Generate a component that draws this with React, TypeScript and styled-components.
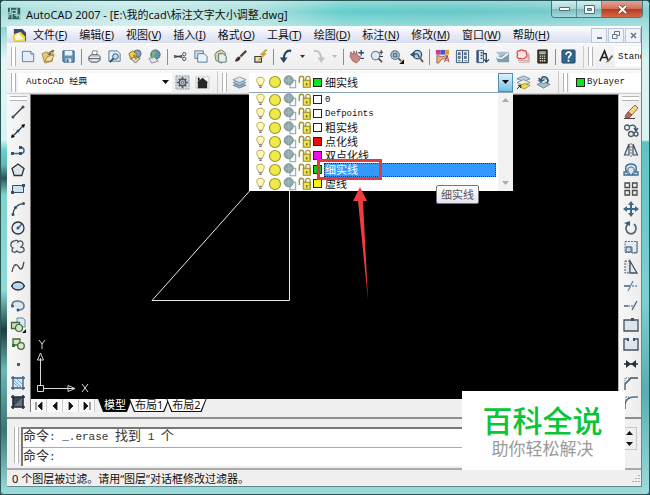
import React from 'react';
import styled, { createGlobalStyle } from 'styled-components';

const uiFont = '"Noto Sans", "Noto Sans CJK SC", sans-serif';
const monoFont = '"Liberation Mono", "Noto Sans CJK SC", monospace';

const GlobalStyle = createGlobalStyle`
  *, *::before, *::after { box-sizing: border-box; }
  body { margin: 0; background: #1f4648; font-family: ${uiFont}; font-size: 11px; color: #111; }
  button, input, select { font: inherit; color: inherit; margin: 0; padding: 0; border: 0; background: none; border-radius: 0; }
  svg { display: block; flex: none; }
`;

const Window = styled.div`
  position: relative;
  min-height: 100vh;
  display: flex;
  flex-direction: column;
  padding: 0 8px 8px 7px;
  overflow: hidden;
  border-radius: 6px 6px 4px 4px;
  background:
    linear-gradient(180deg, #b9e4e2 0, #8fd4d0 26px, #e6f6f5 60px, #d8f3f2 140px, #67d0cb 150px, #5fbab7 165px, #2b5554 178px, #7fd4cd 195px, #8cdcd4 290px, #1d3f3f 330px, #6bb9b3 370px, #3b7573 430px, #96dad6 490px) left / 7px 100% no-repeat,
    linear-gradient(180deg, #7fd0d2 0, #d9f3f3 60px, #d9f3f3 140px, #5fc3c2 142px, #7ed0d0 300px, #58aeae 390px, #9fdcdc 100%) right / 8px 100% no-repeat,
    #9bd9d8;
  box-shadow: inset 0 0 0 1px #2c5557;
`;

const TitleBar = styled.header`
  display: flex;
  align-items: flex-start;
  height: 26px;
  margin: 1px -7px -1px -6px;
  padding: 0 6px 0 7px;
  background: linear-gradient(180deg, rgba(255,255,255,.3), rgba(255,255,255,0) 40%, rgba(255,255,255,.35)),
    linear-gradient(100deg, #a5dddb 0, #c4e9e7 22%, #a8dfdd 40%, #63cdcb 53%, #66c8c8 70%, #83cfd1 100%);
`;
const Title = styled.h1`
  flex: 1;
  display: flex;
  align-items: center;
  gap: 5px;
  height: 25px;
  margin: 0;
  font-size: 11px;
  font-weight: 400;
  white-space: nowrap;
`;
const Caption = styled.div`
  display: flex;
  height: 17px;
  border: 1px solid #48777d;
  border-top: 0;
  border-radius: 0 0 4px 4px;
  overflow: hidden;
`;
const CaptionButton = styled.button<{ $close?: boolean }>`
  display: grid;
  place-items: center;
  width: ${p => (p.$close ? 40 : 25)}px;
  border-right: ${p => (p.$close ? 0 : 1)}px solid #62939a;
  background: ${p => p.$close
    ? 'linear-gradient(#e3a595 0, #d2705a 48%, #b93a20 52%, #d5684a 100%)'
    : 'linear-gradient(#d3eef0 0, #a9d6da 48%, #7db9bf 52%, #a4dbdd 100%)'};
`;

const Client = styled.div`
  flex: 1;
  display: flex;
  flex-direction: column;
  background: #f0f0f0;
  border-right: 1px solid #5d8d90;
  border-bottom: 1px solid #5d8d90;
`;

const MenuBar = styled.nav`
  display: flex;
  align-items: center;
  height: 17px;
  padding-left: 5px;
  border-top: 1px solid #f8ffff;
  background: linear-gradient(#fbfcfe, #e4e8f5 60%, #d9dff0);
`;
const MenuButton = styled.button`
  padding: 0 6px;
  height: 16px;
  line-height: 16px;
  white-space: nowrap;
`;
const MdiButtons = styled.div`
  display: flex;
  gap: 1px;
  margin-left: auto;
`;
const MdiButton = styled.button`
  display: grid;
  place-items: center;
  width: 16px;
  height: 15px;
  border: 1px solid #bcc7d6;
  background: #f1f5fb;
`;

const ToolBar = styled.div<{ $height: number }>`
  display: flex;
  align-items: center;
  height: ${p => p.$height}px;
  border-top: 1px solid #fdfdfd;
  border-bottom: 1px solid #cfcfcf;
  background: linear-gradient(#f6f6f6, #efefef);
  white-space: nowrap;
`;
const Grip = styled.span`
  flex: none;
  width: 5px;
  height: 19px;
  margin: 0 2px 0 4px;
  border: solid #b4b4b4;
  border-width: 0 1px;
  background: #fff;
`;
const GroupEnd = styled.span`
  flex: none;
  width: 1px;
  height: 22px;
  margin-left: 5px;
  background: #cbcbcb;
`;
const Separator = styled.span`
  flex: none;
  width: 1px;
  height: 16px;
  margin: 0 2px 0 3px;
  background: #8e8e8e;
`;
const ToolButton = styled.button<{ $narrow?: boolean }>`
  flex: none;
  display: grid;
  place-items: center;
  width: ${p => (p.$narrow ? 12 : 20)}px;
  height: 20px;
`;
const Field = styled.div<{ $width?: number }>`
  position: relative;
  display: flex;
  align-items: center;
  flex: ${p => (p.$width ? 'none' : '1')};
  width: ${p => (p.$width ? `${p.$width}px` : 'auto')};
  height: 19px;
  background: #fff;
`;
const ColorField = styled(Field)`
  padding-left: 6px;
`;
const PlainSelect = styled.select<{ $indent: number }>`
  appearance: none;
  flex: 1;
  min-width: 0;
  height: 19px;
  padding-left: ${p => p.$indent}px;
  font-family: ${monoFont};
  font-size: 9px;
`;
const SelectArrow = styled.span`
  display: grid;
  place-items: center;
  width: 14px;
  pointer-events: none;
`;
const StyleInput = styled.input`
  flex: 1;
  min-width: 0;
  height: 20px;
  padding-left: 3px;
  background: #fff;
  font-family: ${monoFont};
  font-size: 9px;
`;

const LayerRow = styled.div`
  display: flex;
  align-items: center;
  flex: 1;
  height: 14px;
  padding-left: 5px;
`;
const LayerSelect = styled.select`
  appearance: none;
  flex: 1;
  min-width: 0;
  height: 19px;
  padding-left: 1px;
  font-size: 11px;
`;
const ArrowButton = styled.button`
  display: grid;
  place-items: center;
  width: 15px;
  height: 19px;
  border: 1px solid #4e90b4;
  background: linear-gradient(#dff2fc, #a8d9f2 50%, #79bfe3);
`;
const Swatch = styled.span<{ $color: string }>`
  flex: none;
  width: 9px;
  height: 9px;
  margin-right: 2px;
  border: 1px solid #222;
  background: ${p => p.$color};
`;
const LayerPopup = styled.div`
  position: absolute;
  z-index: 3;
  top: 19px;
  left: 0;
  right: 0;
  display: flex;
  background: #fff;
  border-top: 1px solid #8aa5bb;
`;
const LayerList = styled.ul`
  flex: 1;
  margin: 0;
  padding: 0;
  list-style: none;
`;
const LayerOption = styled.li`
  display: flex;
  align-items: center;
  height: 14px;
  padding-left: 5px;
`;
const LayerName = styled.span<{ $active?: boolean; $latin?: boolean }>`
  flex: 1;
  height: 14px;
  padding-left: ${p => (p.$active ? 0 : 1)}px;
  margin-right: 2px;
  line-height: ${p => (p.$active ? 12 : 14)}px;
  font-family: ${p => (p.$latin ? monoFont : uiFont)};
  font-size: ${p => (p.$latin ? 9 : 11)}px;
  color: ${p => (p.$active ? '#fff' : '#111')};
  background: ${p => (p.$active ? '#3399ff' : 'transparent')};
  border: ${p => (p.$active ? '1px dotted #17345c' : '0')};
`;
const ListScroll = styled.div`
  display: flex;
  flex-direction: column;
  justify-content: space-between;
  width: 15px;
  background: #f2f2f2;
`;
const ScrollButton = styled.button`
  display: grid;
  place-items: center;
  width: 100%;
  height: 15px;
`;
const Highlight = styled.div`
  position: absolute;
  left: 68px;
  top: 66px;
  width: 65px;
  height: 21px;
  border: 3px solid #e23b3f;
`;
const Pointer = styled.svg`
  position: absolute;
  left: 104px;
  top: 93px;
`;
const Tooltip = styled.div`
  position: absolute;
  left: 187px;
  top: 92px;
  height: 19px;
  padding: 0 4px;
  line-height: 17px;
  border: 1px solid #777;
  border-radius: 2px;
  color: #555;
  background: linear-gradient(#fff, #e4e5f0);
`;

const Workspace = styled.main`
  flex: 1;
  display: flex;
  min-height: 0;
`;
const SideBar = styled.div<{ $right?: boolean }>`
  flex: none;
  display: flex;
  flex-direction: column;
  width: ${p => (p.$right ? 22 : 23)}px;
  background: linear-gradient(90deg, #f8f8f8, #ececec);
`;
const SideGrip = styled.span`
  width: 17px;
  height: 5px;
  margin: 2px 2px 1px 3px;
  border: solid #b4b4b4;
  border-width: 1px 0;
  background: #fff;
`;
const SideButton = styled.button`
  flex: 1;
  min-height: 0;
  display: grid;
  place-items: center;
  padding-right: 2px;
`;
const ModifyButton = styled(SideButton)`
  padding: 0 0 0 2px;
`;
const Document = styled.section`
  flex: 1;
  display: flex;
  flex-direction: column;
  border-left: 1px solid #777;
  border-right: 1px solid #b5b5b5;
  border-top: 1px solid #777;
`;
const Canvas = styled.div`
  position: relative;
  flex: 1;
  overflow: hidden;
  background: #000;
`;
const Drawing = styled.svg`
  position: absolute;
  left: 0;
  top: 0;
`;
const Ucs = styled.svg`
  position: absolute;
  left: 4px;
  bottom: 3px;
`;
const TabStrip = styled.div`
  display: flex;
  height: 13px;
`;
const TabNav = styled.button`
  display: grid;
  place-items: center;
  width: 16px;
  border-right: 1px solid #ccc;
  background: #fafafa;
`;
const Tab = styled.button<{ $active?: boolean; $first?: boolean }>`
  height: 13px;
  margin-left: ${p => (p.$first ? 3 : -3)}px;
  padding: 0 1px 1px;
  background: #111;
  clip-path: polygon(0 0, 100% 0, calc(100% - 5px) 100%, 5px 100%);
  span {
    display: block;
    height: 12px;
    padding: 0 5px;
    line-height: 12px;
    background: ${p => (p.$active ? '#000' : '#fff')};
    color: ${p => (p.$active ? '#fff' : '#111')};
    clip-path: polygon(0 0, 100% 0, calc(100% - 5px) 100%, 5px 100%);
  }
`;

const CommandPanel = styled.section`
  display: flex;
  align-items: stretch;
  height: 51px;
  margin-top: 5px;
  padding: 8px 4px 2px 3px;
  border-top: 2px solid #8d8d8d;
`;
const CommandGrip = styled(Grip)`
  height: 36px;
`;
const CommandBox = styled.div`
  flex: 1;
  display: flex;
  flex-direction: column;
  border: 1px solid #777;
  border-width: 2px 0 0 2px;
  background: #fff;
  color: #333;
  font-family: ${monoFont};
  font-size: 13px;
`;
const HistoryLine = styled.output`
  height: 20px;
  line-height: 15px;
  border-bottom: 1px solid #aaa;
  white-space: pre;
`;
const Prompt = styled.label`
  display: flex;
  align-items: baseline;
  height: 18px;
  line-height: 18px;
`;
const PromptInput = styled.input`
  flex: 1;
  min-width: 0;
  padding-left: 4px;
`;
const Half = styled.span`
  font-size: 11px;
`;
const CommandScroll = styled.div`
  display: flex;
  flex-direction: column;
  width: 14px;
  height: 23px;
  border: 1px solid #c8c8c8;
  border-width: 1px 1px 1px 0;
`;
const SpinButton = styled.button`
  flex: 1;
  display: grid;
  place-items: center;
`;
const StatusBar = styled.footer`
  display: flex;
  align-items: center;
  justify-content: space-between;
  height: 18px;
  padding-left: 5px;
  border-top: 2px solid #aaa;
  background: #f0eeee;
`;

const Watermark = styled.aside`
  position: absolute;
  z-index: 5;
  right: 25px;
  bottom: 25px;
  display: flex;
  flex-direction: column;
  align-items: center;
  justify-content: center;
  width: 163px;
  height: 79px;
  padding: 4px 2px 0 0;
  background: #fff;
  font-family: "Liberation Sans", "Noto Sans CJK SC", sans-serif;
`;
const WatermarkTitle = styled.strong`
  font-size: 30px;
  line-height: 35px;
  font-weight: 500;
  color: #08c636;
`;
const WatermarkText = styled.span`
  font-size: 17px;
  line-height: 22px;
  color: #9a9a9a;
`;

const navy = '#2d5375';
const pale = '#cfe0ef';
const dark = '#2e3338';

const icons: Record<string, React.ReactNode> = {
  new: <path d="M1.5 2.5h9l3 3v8h-12z M10.5 2.5v3h3" fill="#e3eef7" stroke="#5b7d9c" />,
  open: <><path d="M1 5l5-2 2 1 5-3-1 12-8 2z" fill="#e2c878" stroke="#98793a" strokeWidth=".8" /><path d="M4 13l3-5 7-2-3 7z" fill="#f3e1a2" stroke="#8b6c2c" strokeWidth=".8" /><path d="M9 6c0-3 3-4 5-4M9 6l-2-1m2 1l2-1" fill="none" stroke="#444" /></>,
  save: <><path d="M2 2h12v12h-11l-1-1z" fill="#5d91b9" stroke="#305c83" /><path d="M4 2h8v5h-8z" fill="#e9f1f7" /><path d="M5 10h6v4h-6z" fill="#dfe9f0" /><path d="M6 11h2v3h-2z" fill="#305c83" /></>,
  print: <><path d="M5 7l1-5h5l-1 5z" fill="#fff" stroke="#666" strokeWidth=".8" /><path d="M2 8l3-2h7l2 2v4l-3 2h-7l-2-2z" fill="#c4c8cf" stroke="#555d68" /><path d="M3 9h10M5 12h6" stroke="#fff" /><path d="M2 10h12" stroke="#59606c" /></>,
  preview: <><path d="M2 2h9l3 3v8h-12z" fill="#e5eef5" stroke="#567691" /><circle cx="9" cy="8" r="3" fill="#c5dbea" stroke={navy} /><path d="M7 10l-4 4" stroke={navy} strokeWidth="2" /></>,
  publish: <><circle cx="11" cy="5" r="4" fill="#7aa4c4" stroke="#4c6175" /><path d="M2 5l4-3 4 3-1 5-5 1z" fill="#f0cc51" stroke="#906f18" /><path d="M4 10l5-2 5 2-5 5z" fill="#ddd7c4" stroke="#6b6859" /><path d="M7 6l3 5" stroke="#be8b1c" strokeWidth="2" /></>,
  globe: <><circle cx="9" cy="6" r="5" fill="#5c95a8" stroke="#45677c" /><path d="M6 3c4-2 4 1 2 3s3 3 1 5c-3-1-5-5-3-8z" fill="#84b969" /><path d="M2 10l6-1 4 4-7 2z" fill="#e2e8ed" stroke="#83909b" /></>,
  cut: <><path d="M1 7l9 2M1 9l9-2" stroke="#3a3f46" strokeWidth="1.3" /><circle cx="12" cy="5.5" r="1.8" fill="none" stroke="#3f4a57" /><circle cx="12" cy="10.5" r="1.8" fill="none" stroke="#3f4a57" /></>,
  copy: <><path d="M2 2h9v8h-9z" fill="#d4e3ef" stroke="#547a9a" /><path d="M5 5h7l3 3v6h-10z" fill="#eaf3f9" stroke="#547a9a" /></>,
  paste: <><path d="M4 3l5-2 4 3 1 7-5 4-6-3-1-6z" fill="#d0d5ae" stroke="#717b56" /><path d="M6 5h5l3 3v6h-8z" fill="#e8f0ef" stroke="#56766f" /></>,
  brush: <><path d="M14 2L8 8" stroke="#5b4432" strokeWidth="2.4" /><path d="M2 13c1-3 3-5 5-5l1 1c0 3-3 5-6 4z" fill="#383634" /></>,
  edit: <><path d="M2 8h7v6h-7z" fill="#f2dfa6" stroke="#3a3f49" strokeWidth="1.3" /><path d="M13 1L8 6h3l-5 6 8-7h-3l4-4z" fill="#f4cd2a" stroke="#9e7514" strokeWidth=".7" /></>,
  undo: <><path d="M13 2C8 1 5 5 5 11" fill="none" stroke="#274569" strokeWidth="2.4" /><path d="M1 9l4 6 4-6z" fill="#274569" /></>,
  redo: <><path d="M3 2c5-1 8 3 8 9" fill="none" stroke="#bfc4c8" strokeWidth="2.2" /><path d="M7 9l4 6 4-6z" fill="#bfc4c8" /></>,
  pan: <><path d="M2 3l3 3 0-4 2 4 1-4 1 5 3 1-1 4-3 3-4-2-3-5z" fill="#c98a84" stroke="#925d5c" strokeWidth=".8" /><path d="M13 1v6M10 4h6M12 10h4" stroke="#2c4e74" strokeWidth="1.5" /></>,
  zoom: <><circle cx="7" cy="7" r="4.5" fill="#deebf2" stroke="#6c8597" strokeWidth="1.3" /><path d="M10 10l4 4" stroke="#735a40" strokeWidth="2" /><path d="M13 1v5M11 3.500h4M11 8h4" stroke="#333" /></>,
  zoomWindow: <><circle cx="6.500" cy="6.500" r="4.500" fill="#d5e4ee" stroke="#587590" strokeWidth="1.300" /><path d="M4.500 4.500h4v4h-4z" fill="#90b2cb" stroke={navy} /><path d="M10 10l3 3" stroke="#735a40" strokeWidth="2" /><path d="M16 11v5h-5z" fill="#111" /></>,
  zoomPrev: <><circle cx="9" cy="6" r="4.500" fill="#b7cee0" stroke={navy} strokeWidth="1.400" /><path d="M12 10l3 4" stroke="#735a40" strokeWidth="2" /><path d="M1 6l5-4v7z" fill={navy} /><path d="M5 6c4-2 5 0 6 3" fill="none" stroke={navy} strokeWidth="1.500" /></>,
  props: <><path d="M1 1h5v5h-5z" fill="#c23b9d" /><path d="M6 1h5v5h-5z" fill="#4659bb" /><path d="M11 1h4v5h-4z" fill="#dd9b30" /><path d="M2 7l6 1 5-1v3l-6 1-3 4H2z" fill="#dfaf8f" stroke="#8c513a" strokeWidth=".8" /><path d="M10 14l3-7 2 7m-4-2h3" stroke="#b14242" fill="none" /></>,
  design: <><path d="M1.500 1.500h13v13h-13z" fill="#e1ebf2" stroke="#385570" /><path d="M8 2v12" stroke="#385570" /><path d="M3.500 4h2v2h-2zM3.500 8h2v2h-2zM10 4h2v2h-2zM10 8h2v2h-2zM3 12.500h3M10 12.500h3" fill="#708da6" stroke="#385570" strokeWidth=".8" /></>,
  palettes: <><path d="M2 1.500h7v13h-7z" fill="#e1ebf2" stroke="#385570" /><path d="M2 2h2v12H2z" fill="#2f5478" /><path d="M6 4h2M6 7h2M6 10h2" stroke={navy} strokeWidth="1.500" /><path d="M9 5h3v8M10 11l2 3 3-3" fill="none" stroke="#273d54" strokeWidth="1.300" /></>,
  sheet: <><path d="M1 3h14l-5 5H5z" fill="#abc3ce" /><path d="M1 9l9-3 5-2v10H3z" fill="#7d9eac" /><path d="M2 9l5 1 7-5" stroke="#fff" fill="none" strokeWidth="1.500" /></>,
  markup: <><path d="M5 2c2-2 4 0 4 0 3-1 4 2 3 3 2 2 0 4-1 4-1 2-4 2-5 1-3 1-5-2-3-4-2-2 0-5 2-4z" fill="#fbe4e2" stroke="#c84b4c" strokeWidth="1.300" /><path d="M3 12h11V4" fill="none" stroke="#cf8e8c" /><path d="M4 14h11V6" fill="none" stroke="#cf8e8c" /></>,
  calc: <><path d="M3 1h10v14H3z" fill="#3c332f" stroke="#211c19" /><path d="M4.500 2.500h7v3h-7z" fill="#8ec09c" /><path d="M5 7.500h6M5 10h6M5 12.500h6" stroke="#e3d9cb" strokeWidth="1.400" strokeDasharray="1.500 .8" /></>,
  help: <><rect x="1" y="1" width="14" height="14" rx="1" fill="#326489" stroke="#224a70" /><path d="M5.500 6c0-4 6-3 5 0-.5 1.500-2.500 1.500-2.500 4M8 11.500v2" fill="none" stroke="#fff" strokeWidth="1.800" /></>,
  style: <><path d="M2 13L7 2l4 11M4 9h6" fill="none" stroke="#222" strokeWidth="1.700" /><path d="M15 6l-5 6-2 3 4-2 4-5z" fill="#716554" /></>,
  gear: <><path d="M1 1h14v14H1z" fill="#d3d8dc" stroke="#8b9299" strokeDasharray="2 1" /><path d="M8 2v12M2 8h12M4 4l8 8M12 4l-8 8" stroke="#535b63" strokeWidth="1.800" /><circle cx="8" cy="8" r="3.500" fill="#b6c0ca" stroke="#47515b" strokeWidth="1.300" /><circle cx="8" cy="8" r="1.300" fill="#f6f6f6" stroke="#47515b" /></>,
  home: <><path d="M1 2h14v12H1z" fill="none" stroke="#a3a3a3" strokeDasharray="1 1" /><path d="M2 8l6-5 6 5h-1v6H3V8z" fill="#262626" /><path d="M3 3h2v3H3z" fill="#222" /></>,
  layers: <><path d="M1 11l7-3 7 3-7 3z" fill="#8ea9bd" stroke="#637b8e" strokeWidth=".7" /><path d="M1 8l7-3 7 3-7 3z" fill="#abc3d4" stroke="#637b8e" strokeWidth=".7" /><path d="M1 5l7-3 7 3-7 3z" fill="#dae8f0" stroke="#637b8e" strokeWidth=".7" /></>,
  layerCurrent: <><path d="M1 4l7-3 7 3-7 3z" fill="#bad0df" stroke="#5a7d95" strokeWidth=".8" /><path d="M1 8l7-3 7 3-7 3z" fill="#eef3ee" stroke="#6b7e75" strokeWidth=".8" /><path d="M3 12l6-3 6 2-6 4z" fill="#eddc47" stroke="#8e8122" strokeWidth=".8" /><path d="M1 15l4-4M2 11h3v3" fill="none" stroke="#222" /></>,
  layerPrev: <><path d="M1 10l7-3 7 3-7 4z" fill="#a4bccb" stroke="#5e7789" strokeWidth=".8" /><path d="M2 6l6-3 6 3-6 3z" fill="#dfeaf0" stroke="#5e7789" strokeWidth=".8" /><path d="M12 9c2-5-1-8-5-7L5 6M3 3l2 4 4-2" fill="none" stroke={navy} strokeWidth="1.600" /></>,
  line: <><path d="M3 13L13 3" stroke={dark} strokeWidth="1.300" /><circle cx="3" cy="13" r="1.500" fill={navy} /><circle cx="13" cy="3" r="1.500" fill={navy} /></>,
  xline: <><path d="M2 14L14 2" stroke={dark} strokeWidth="1.200" /><path d="M1 15l1-4 3 3zM15 1l-4 1 3 3z" fill="#111" /><circle cx="8" cy="8" r="1.500" fill={navy} /></>,
  pline: <><path d="M2 11.500h9c4 0 4-6 0-6" fill="none" stroke="#41698a" strokeWidth="1.500" /><path d="M1 10h3v3H1zM9 10h3v3H9zM9 4h3v3H9z" fill={navy} /></>,
  polygon: <path d="M8 2l6 4.500-2.200 7H4.200L2 6.500z" fill="#dce5eb" stroke={dark} strokeWidth="1.300" />,
  rect: <><path d="M2.500 4.500h11v7h-11z" fill={pale} stroke="#414e5c" /><path d="M1 10h3v3H1zM12 3h3v3h-3z" fill={navy} /></>,
  arc: <><path d="M3 14C3 8 7 3 14 2.500" fill="none" stroke="#3d4c5c" strokeWidth="1.300" /><circle cx="3" cy="13.500" r="1.500" fill={navy} /><circle cx="5.500" cy="6.500" r="1.500" fill={navy} /><circle cx="13.500" cy="2.500" r="1.500" fill={navy} /></>,
  circle: <><circle cx="8" cy="8" r="6" fill="#e4edf3" stroke={dark} strokeWidth="1.300" /><path d="M8 8l4-4" stroke="#34638a" strokeWidth="1.500" /><circle cx="8" cy="8" r="1.600" fill="#34638a" /></>,
  cloud: <path d="M4 2c2-1 4-1 4 1 2-2 5-1 5 2 0 2-1 2-2 3 4 0 4 5 1 5-2 1-4 0-5-1-3 3-7 0-4-3-3-1-3-6 1-7z" fill="#e8eff3" stroke="#4b5760" strokeWidth="1.300" />,
  spline: <path d="M2 13C3 7 5 5 7 6s2 4 4 4 2-4 3-7" fill="none" stroke="#41484f" strokeWidth="1.300" />,
  ellipse: <><ellipse cx="8" cy="8" rx="6" ry="4" fill="#b9d6ea" stroke={dark} strokeWidth="1.300" /><path d="M1 7h2v2H1zM13 7h2v2h-2zM7 3h2v2H7z" fill={navy} /></>,
  ellipseArc: <><path d="M2 8c0-6 12-5 12 1 0 3-3 4-6 4" fill="#dbe7ef" stroke="#5b7995" strokeWidth="1.600" /><circle cx="2.500" cy="9" r="1.500" fill={navy} /><circle cx="8" cy="13" r="1.500" fill={navy} /></>,
  insert: <><path d="M7 1h6l2 2v7H7z" fill="#dce9f3" stroke="#5e89aa" /><path d="M1.500 5.500h8v6h-8z" fill="#cbe1ba" stroke="#3c653c" strokeWidth="1.300" /><circle cx="9" cy="11" r="3.500" fill="#d6e5c6" stroke="#3c653c" strokeWidth="1.200" /><path d="M16 12v4h-4z" fill="#111" /></>,
  block: <><path d="M3 3h7v6H3z" fill="#d8e9c5" stroke="#46663d" strokeWidth="1.300" /><circle cx="11" cy="10" r="3.300" fill="#dbe9c7" stroke="#46663d" strokeWidth="1.300" /><path d="M2 8h3v3H2z" fill="#3e6b3b" /></>,
  point: <path d="M7 7h3v3H7z" fill="#34638a" />,
  hatch: <><path d="M3 3h10v10H3z" fill="#d6e6f2" /><path d="M3 1v14M13 1v14M1 3h14M1 13h14" stroke="#355a7b" strokeWidth="1.300" /><path d="M4 8l4 4M4 5l8 8M7 4l5 5" stroke="#7da5c6" /></>,
  gradient: <><path d="M3 3h10v10H3z" fill="#6b7680" /><path d="M3 3h10L3 13z" fill="#3d4853" /><path d="M3 1v14M13 1v14M1 3h14M1 13h14" stroke="#1e2e40" strokeWidth="1.600" /></>,
  erase: <><path d="M12 1l3 3-6 7-4-3z" fill="#eeda83" stroke="#66583a" strokeWidth=".8" /><path d="M5 8l4 3-3 3H3l-1-2z" fill="#c6645c" stroke="#7a4039" strokeWidth=".8" /><path d="M1 14.500h11" stroke="#444" /></>,
  copyObj: <><circle cx="4" cy="4.500" r="2.500" fill="#e8eef2" stroke="#4e5a66" strokeWidth="1.300" /><circle cx="8" cy="11" r="2.500" fill="#e8eef2" stroke="#4e5a66" strokeWidth="1.300" /><circle cx="13" cy="11" r="2" fill="#e8eef2" stroke="#4e5a66" strokeWidth="1.300" /><path d="M7 3c4-2 6 0 6 4M11 5l2 3 2-3" fill="none" stroke={navy} strokeWidth="1.300" /></>,
  mirror: <><path d="M6 2v11H1.500zM10 2v11h4.500z" fill="#dde8ef" stroke="#40505f" strokeWidth="1.200" /><path d="M8 1v14" stroke="#666" strokeDasharray="2 1" /></>,
  offset: <><path d="M1 13h14v-3h-3c3-4 1-8-4-8S1 6 4 10H1z" fill="#d6e6f1" stroke="#3f6b90" strokeWidth="1.300" /><path d="M4 12h3c-4-4-2-7 1-7s5 3 1 7h3" fill="none" stroke="#3f6b90" /></>,
  array: <path d="M2 2h4.500v4.500H2zM9.500 2H14v4.500H9.500zM2 9.500h4.500V14H2zM9.500 9.500H14V14H9.500z" fill="#f2f2f2" stroke="#4a4a4a" strokeWidth="1.300" />,
  move: <><path d="M8 3v10M3 8h10" stroke="#3f6588" strokeWidth="2" /><path d="M8 0l3 4H5zM8 16l3-4H5zM0 8l4-3v6zM16 8l-4-3v6z" fill="#3f6588" /></>,
  rotate: <><path d="M5 4a5 5.500 0 1 0 6 0" fill="none" stroke="#526b80" strokeWidth="1.800" /><path d="M1 3l6-2v5z" fill="#3c5c78" /></>,
  scale: <><path d="M2 2.500h12v11H2z" fill="#e5edf2" stroke="#5e7488" strokeDasharray="2 1" /><path d="M14 2v12H9V8H3" fill="none" stroke="#5e7488" /><path d="M3 8h5v5H3z" fill="#c9dae6" stroke="#45617b" /></>,
  stretch: <><path d="M2 2h5v12H2z" fill="#e2e7eb" stroke="#4a555f" strokeDasharray="2 1" /><path d="M7 2l7 12H7z" fill="#e2eaf1" stroke="#47525d" strokeWidth="1.300" /></>,
  trim: <><path d="M1 8h6" stroke="#47607a" strokeWidth="1.300" /><path d="M9 8h6" stroke="#47607a" strokeDasharray="2 1" /><path d="M5 13l5-10" stroke="#5f8bad" strokeWidth="1.300" /></>,
  extend: <><path d="M1 9h4" stroke="#47607a" strokeWidth="1.300" /><path d="M5 9h6" stroke="#47607a" strokeDasharray="2 1" /><path d="M9 13l5-9" stroke="#4b6680" strokeWidth="1.300" /></>,
  breakPoint: <><path d="M1 3h14v11H1z" fill="#dce5ec" stroke="#46515c" strokeWidth="1.300" /><path d="M8 1h3v3H8z" fill={navy} /></>,
  breakGap: <><path d="M2 4h12v10H2z" fill="#dce5ec" /><path d="M5 3H1v11h14V3h-4" fill="none" stroke="#46515c" strokeWidth="1.400" /><path d="M4 2h2v3H4zM10 2h2v3h-2z" fill={navy} /></>,
  join: <><path d="M1 8h14" stroke="#25313e" strokeWidth="1.500" /><path d="M3 4l5 4-5 4zM13 4L8 8l5 4z" fill="#25313e" /></>,
  chamfer: <><path d="M2 15V9l6-6h7" fill="none" stroke="#46515c" strokeWidth="1.300" /><path d="M2 8V3h6" fill="none" stroke="#555" strokeDasharray="1 1" /><path d="M2 9l6-6" stroke="#477299" strokeWidth="1.500" /></>,
  fillet: <><path d="M2 15v-4c0-5 4-8 9-8h4" fill="none" stroke="#477299" strokeWidth="1.600" /><path d="M2 8V3h5" fill="none" stroke="#555" strokeDasharray="1 1" /></>,
  app: <><path d="M0 1h15v14H0z" fill="#2b625f" /><path d="M3 1v6H0M5 4h5v4H5zM11 1v12M1 13V9h4v5M8 10h6v4" fill="none" stroke="#b4ded6" strokeWidth="1.300" /></>,
  doc: <><path d="M2 1h9l4 4v9H2z" fill="#364a72" /><path d="M1 7l8-3 5 5v5H1z" fill="#f0d53b" /><path d="M3 9c3-5 6-4 6-1l4 4-9 1z" fill="#f9f6e6" /></>,
  bulb: <><path d="M8 1.500c-6 0-5 5-3 8l1 2h4l1-2c2-3 3-8-3-8z" fill="#fdf8c0" stroke="#bba340" strokeWidth="1.200" /><path d="M6 12h4M6.500 14h3" stroke="#777" strokeWidth="1.300" /></>,
  sun: <circle cx="8" cy="8" r="6.300" fill="#f0e94a" stroke="#9c9629" strokeWidth="1.300" />,
  freeze: <><path d="M8 6h6.500v8.500H8z" fill="#f5f8fa" stroke="#8ba3b6" strokeWidth="1.200" /><circle cx="6.500" cy="6" r="5.200" fill="#91a8aa" stroke="#748e91" /><path d="M6.500 2v8M2.500 6h8" stroke="#a8bcbd" /></>,
  lock: <><path d="M1.500 9V4c0-3.500 5-3.500 5 0v3" fill="none" stroke="#a3962f" strokeWidth="1.700" /><path d="M6 6h8v8H6z" fill="#ece258" stroke="#96882a" strokeWidth="1.200" /><path d="M9 6V3c0-2 5-2 5 1v8" fill="none" stroke="#9b8d2b" strokeWidth="1.300" /><path d="M10 9v3" stroke="#736718" strokeWidth="1.500" /></>,
};

const Icon = ({ name, size = 16 }: { name: string; size?: number }) => (
  <svg width={size} height={size} viewBox="0 0 16 16" fill="none" aria-hidden="true">{icons[name]}</svg>
);

const Caret = ({ up, color = '#111' }: { up?: boolean; color?: string }) => (
  <svg width="7" height="4" viewBox="0 0 7 4" aria-hidden="true"><path d={up ? 'M0 4l3.5-4L7 4z' : 'M0 0h7L3.500 4z'} fill={color} /></svg>
);

const menus: [string, string][] = [
  ['文件', 'F'], ['编辑', 'E'], ['视图', 'V'], ['插入', 'I'], ['格式', 'O'], ['工具', 'T'],
  ['绘图', 'D'], ['标注', 'N'], ['修改', 'M'], ['窗口', 'W'], ['帮助', 'H'],
];

const standardTools = [
  'new', 'open', 'save', '|', 'print', 'preview', 'publish', 'globe', '|', 'cut', 'copy', 'paste', 'brush', 'edit', '|',
  'undo', 'v', 'redo', 'x', '|', 'pan', 'zoom', 'zoomWindow', 'zoomPrev', '|',
  'props', 'design', 'palettes', 'sheet', 'markup', 'calc', '|', 'help',
];
const drawTools = ['line', 'xline', 'pline', 'polygon', 'rect', 'arc', 'circle', 'cloud', 'spline', 'ellipse', 'ellipseArc', 'insert', 'block', 'point', 'hatch', 'gradient'];
const modifyTools = ['erase', 'copyObj', 'mirror', 'offset', 'array', 'move', 'rotate', 'scale', 'stretch', 'trim', 'extend', 'breakPoint', 'breakGap', 'join', 'chamfer', 'fillet'];

const layers = [
  { name: '0', color: '#fff', latin: true },
  { name: 'Defpoints', color: '#fff', latin: true },
  { name: '粗实线', color: '#fff' },
  { name: '点化线', color: '#e60c0c' },
  { name: '双点化线', color: '#ee10e6' },
  { name: '细实线', color: '#12c81c', active: true },
  { name: '虚线', color: '#fcf01a' },
];

const StateIcons = styled.span`
  display: flex;
  flex: none;
  align-items: center;
  width: 59px;
  gap: 1px;
`;
const LayerState = () => (
  <StateIcons>
    <Icon name="bulb" size={13} /><Icon name="sun" size={14} /><Icon name="freeze" size={14} /><Icon name="lock" size={14} />
  </StateIcons>
);

const navPaths = ['M1 0v8M7 0v8L3 4z', 'M6 0v8L2 4z', 'M2 0v8l4-4z', 'M7 0v8M1 0v8l4-4z'];

export default function App() {
  return (
    <Window>
      <GlobalStyle />
      <TitleBar>
        <Title><Icon name="app" size={13} />{'AutoCAD 2007 - [E:\\我的cad\\标注文字大小调整.dwg]'}</Title>
        <Caption>
          <CaptionButton aria-label="最小化"><svg width="11" height="5"><path d="M.5.5h10v3H.5z" fill="#fff" stroke="#526e75" /></svg></CaptionButton>
          <CaptionButton aria-label="最大化"><svg width="11" height="9"><path d="M.5.5h10v8H.5z" fill="#fff" stroke="#526e75" /><path d="M3.500 3.500h4v2h-4z" fill="#8bbdc3" stroke="#526e75" /></svg></CaptionButton>
          <CaptionButton $close aria-label="关闭"><svg width="11" height="9" viewBox="0 0 11 9"><path d="M2 1l7 7M9 1L2 8" stroke="#6d3a35" strokeWidth="3.600" /><path d="M2 1l7 7M9 1L2 8" stroke="#fff" strokeWidth="2" /></svg></CaptionButton>
        </Caption>
      </TitleBar>

      <Client>
        <MenuBar>
          <Icon name="doc" size={15} />
          {menus.map(([label, key]) => <MenuButton key={key}>{label}(<u>{key}</u>)</MenuButton>)}
          <MdiButtons>
            <MdiButton aria-label="最小化图形"><svg width="7" height="7"><path d="M1 6h5" stroke="#65758c" strokeWidth="2" /></svg></MdiButton>
            <MdiButton aria-label="还原图形"><svg width="8" height="8" fill="none"><path d="M2.500 3V.5h5v4H5M.5 3.500H5v4H.5z" stroke="#65758c" /></svg></MdiButton>
            <MdiButton aria-label="关闭图形"><svg width="7" height="7"><path d="M1 1l5 5M6 1L1 6" stroke="#65758c" strokeWidth="1.500" /></svg></MdiButton>
          </MdiButtons>
        </MenuBar>

        <ToolBar $height={27}>
          <Grip />
          {standardTools.map((tool, i) => {
            if (tool === '|') return <Separator key={i} />;
            if (tool === 'v' || tool === 'x') {
              return <ToolButton key={i} $narrow aria-label="更多"><svg width="5" height="3"><path d="M0 0h5L2.500 3z" fill={tool === 'v' ? '#333' : '#bbb'} /></svg></ToolButton>;
            }
            return <ToolButton key={i} aria-label={tool}><Icon name={tool} size={15} /></ToolButton>;
          })}
          <GroupEnd /><Grip />
          <ToolButton aria-label="文字样式"><Icon name="style" size={15} /></ToolButton>
          <StyleInput aria-label="样式" defaultValue="Standard" />
        </ToolBar>

        <ToolBar $height={24}>
          <Grip />
          <Field $width={154}>
            <PlainSelect $indent={8} aria-label="工作空间">
              <option>AutoCAD 经典</option>
            </PlainSelect>
            <SelectArrow><Caret /></SelectArrow>
          </Field>
          <ToolButton aria-label="工作空间设置"><Icon name="gear" size={15} /></ToolButton>
          <ToolButton aria-label="我的工作空间"><Icon name="home" size={15} /></ToolButton>
          <GroupEnd /><Grip />
          <ToolButton aria-label="图层特性"><Icon name="layers" size={15} /></ToolButton>
          <Field>
            <LayerRow>
              <LayerState />
              <Swatch $color="#08e81c" />
              <LayerSelect aria-label="图层" defaultValue="细实线">
                {layers.map(l => <option key={l.name}>{l.name}</option>)}
              </LayerSelect>
            </LayerRow>
            <ArrowButton aria-label="展开图层"><Caret /></ArrowButton>
            <LayerPopup>
              <LayerList role="listbox" aria-label="图层列表">
                {layers.map(l => (
                  <LayerOption key={l.name} role="option" aria-selected={!!l.active}>
                    <LayerState />
                    <Swatch $color={l.color} />
                    <LayerName $active={l.active} $latin={l.latin}>{l.name}</LayerName>
                  </LayerOption>
                ))}
              </LayerList>
              <ListScroll>
                <ScrollButton aria-label="向上滚动"><Caret up color="#aaa" /></ScrollButton>
                <ScrollButton aria-label="向下滚动"><Caret color="#aaa" /></ScrollButton>
              </ListScroll>
              <Highlight />
              <Pointer width="16" height="116" viewBox="0 0 16 116"><path d="M7 1l7 14h-4l5 99-10-99H0z" fill="#ee3d42" /></Pointer>
              <Tooltip role="tooltip">细实线</Tooltip>
            </LayerPopup>
          </Field>
          <ToolButton aria-label="置为当前"><Icon name="layerCurrent" size={15} /></ToolButton>
          <ToolButton aria-label="上一个图层"><Icon name="layerPrev" size={15} /></ToolButton>
          <GroupEnd /><Grip />
          <ColorField $width={71}>
            <Swatch $color="#08e81c" />
            <PlainSelect $indent={0} aria-label="颜色"><option>ByLayer</option></PlainSelect>
          </ColorField>
        </ToolBar>

        <Workspace>
          <SideBar role="toolbar" aria-label="绘图">
            <SideGrip />
            {drawTools.map(t => <SideButton key={t} aria-label={t}><Icon name={t} size={16} /></SideButton>)}
          </SideBar>
          <Document>
            <Canvas>
              <Drawing width="280" height="220" fill="none" stroke="#e8e8e8"><path d="M258.500 50V205.500H121L240 72" /></Drawing>
              <Ucs width="60" height="62" viewBox="0 0 60 62" fill="none" stroke="#d8d8d8">
                <path d="M2.500 51.500h6v6h-6zM5.500 51V24M9 54.500h30M5.500 19l3 7h-6zM40 54.500l-7-3v6zM4 6l3 4 3-4M7 10v5M47 50l6 8M53 50l-6 8" />
              </Ucs>
            </Canvas>
            <TabStrip>
              {navPaths.map((d, i) => (
                <TabNav key={i} aria-label={['第一个', '上一个', '下一个', '最后一个'][i]}>
                  <svg width="8" height="8"><path d={d} fill="#111" stroke="#111" strokeWidth=".8" /></svg>
                </TabNav>
              ))}
              <Tab $active $first><span>模型</span></Tab>
              <Tab><span>布局1</span></Tab>
              <Tab><span>布局2</span></Tab>
            </TabStrip>
          </Document>
          <SideBar $right role="toolbar" aria-label="修改">
            <SideGrip />
            {modifyTools.map(t => <ModifyButton key={t} aria-label={t}><Icon name={t} size={16} /></ModifyButton>)}
          </SideBar>
        </Workspace>

        <CommandPanel aria-label="命令行">
          <CommandGrip />
          <CommandBox>
            <HistoryLine>命令<Half>: _.erase </Half>找到<Half> 1 </Half>个</HistoryLine>
            <Prompt><span>命令<Half>:</Half></span><PromptInput aria-label="命令输入" /></Prompt>
          </CommandBox>
          <CommandScroll>
            <SpinButton aria-label="上一行"><Caret up /></SpinButton>
            <SpinButton aria-label="下一行"><Caret /></SpinButton>
          </CommandScroll>
        </CommandPanel>
        <StatusBar>
          <span>0 个图层被过滤。请用“图层”对话框修改过滤器。</span>
          <svg width="11" height="11"><path d="M9 2v1M6 5v1M9 5v1M3 8v1M6 8v1M9 8v1" stroke="#aaa" strokeWidth="2" /></svg>
        </StatusBar>
      </Client>

      <Watermark>
        <WatermarkTitle>百科全说</WatermarkTitle>
        <WatermarkText>助你轻松解决</WatermarkText>
      </Watermark>
    </Window>
  );
}
